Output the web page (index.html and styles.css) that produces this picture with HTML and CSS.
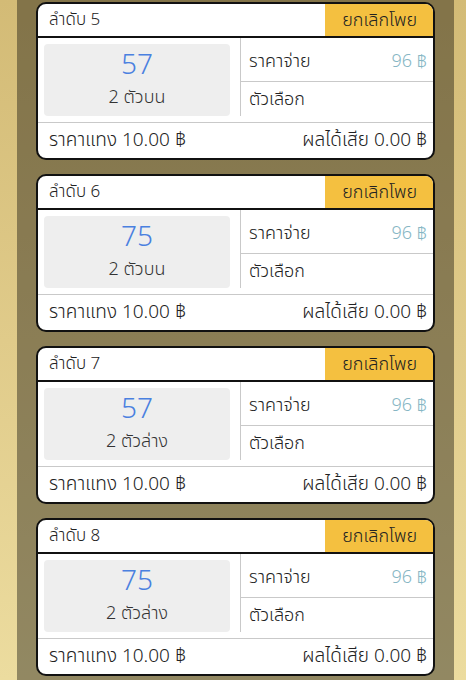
FILE: index.html
```html
<!DOCTYPE html>
<html lang="th">
<head>
<meta charset="utf-8">
<title>โพย</title>
<link rel="stylesheet" href="styles.css">
</head>
<body>
<div class="page">
  <div class="card">
    <div class="card-head"><span class="order">ลำดับ 5</span><span class="cancel">ยกเลิกโพย</span></div>
    <div class="card-body">
      <div class="pick"><div class="num">57</div><div class="type">2 ตัวบน</div></div>
      <div class="info">
        <div class="row row-pay"><span>ราคาจ่าย</span><span class="rate">96 ฿</span></div>
        <div class="row row-opt"><span>ตัวเลือก</span></div>
      </div>
    </div>
    <div class="card-foot"><span>ราคาแทง 10.00 ฿</span><span>ผลได้เสีย 0.00 ฿</span></div>
  </div>
  <div class="card">
    <div class="card-head"><span class="order">ลำดับ 6</span><span class="cancel">ยกเลิกโพย</span></div>
    <div class="card-body">
      <div class="pick"><div class="num">75</div><div class="type">2 ตัวบน</div></div>
      <div class="info">
        <div class="row row-pay"><span>ราคาจ่าย</span><span class="rate">96 ฿</span></div>
        <div class="row row-opt"><span>ตัวเลือก</span></div>
      </div>
    </div>
    <div class="card-foot"><span>ราคาแทง 10.00 ฿</span><span>ผลได้เสีย 0.00 ฿</span></div>
  </div>
  <div class="card">
    <div class="card-head"><span class="order">ลำดับ 7</span><span class="cancel">ยกเลิกโพย</span></div>
    <div class="card-body">
      <div class="pick"><div class="num">57</div><div class="type">2 ตัวล่าง</div></div>
      <div class="info">
        <div class="row row-pay"><span>ราคาจ่าย</span><span class="rate">96 ฿</span></div>
        <div class="row row-opt"><span>ตัวเลือก</span></div>
      </div>
    </div>
    <div class="card-foot"><span>ราคาแทง 10.00 ฿</span><span>ผลได้เสีย 0.00 ฿</span></div>
  </div>
  <div class="card">
    <div class="card-head"><span class="order">ลำดับ 8</span><span class="cancel">ยกเลิกโพย</span></div>
    <div class="card-body">
      <div class="pick"><div class="num">75</div><div class="type">2 ตัวล่าง</div></div>
      <div class="info">
        <div class="row row-pay"><span>ราคาจ่าย</span><span class="rate">96 ฿</span></div>
        <div class="row row-opt"><span>ตัวเลือก</span></div>
      </div>
    </div>
    <div class="card-foot"><span>ราคาแทง 10.00 ฿</span><span>ผลได้เสีย 0.00 ฿</span></div>
  </div>
</div>
</body>
</html>
```

FILE: styles.css
```css
html, body {
  margin: 0;
  padding: 0;
  height: 680px;
  overflow: hidden;
}
body {
  background: linear-gradient(to bottom, #d3bb76 0%, #e0cb8a 50%, #ecdc9f 100%);
  font-family: "Noto Sans Thai", "Noto Sans", sans-serif;
  font-weight: 300;
  color: #222;
}
.page {
  margin-left: 17px;
  width: 437px;
  box-sizing: border-box;
  min-height: 680px;
  padding: 2px 19px 0;
  background: rgba(0, 0, 0, 0.38);
}
.card {
  background: #fff;
  border: 2px solid #111;
  border-radius: 10px;
  overflow: hidden;
  margin-bottom: 14px;
}
.card-head {
  display: flex;
  justify-content: space-between;
  align-items: stretch;
  height: 32px;
  border-bottom: 2px solid #111;
}
.order {
  display: flex;
  align-items: center;
  padding-left: 11px;
  font-size: 17px;
}
.cancel {
  display: flex;
  align-items: center;
  justify-content: flex-end;
  width: 108px;
  box-sizing: border-box;
  padding-right: 16px;
  background: #f4c040;
  font-size: 18px;
}
.card-body {
  display: flex;
  height: 84px;
  border-bottom: 1px solid #c9c9c9;
}
.pick {
  width: 186px;
  margin: 6px 0 6px 6px;
  background: #eeeeee;
  border-radius: 4px;
  display: flex;
  flex-direction: column;
  align-items: center;
  justify-content: center;
  gap: 6px;
}
.num {
  color: #4a80e0;
  font-size: 28px;
  line-height: 30px;
}
.type {
  font-size: 18px;
  line-height: 22px;
  color: #333;
}
.info {
  flex: 1;
  margin-left: 10px;
  margin-bottom: 6px;
  border-left: 1px solid #c9c9c9;
  display: flex;
  flex-direction: column;
  font-size: 18px;
}
.row {
  display: flex;
  justify-content: space-between;
  align-items: center;
  padding: 0 6px 0 8px;
}
.row-pay {
  height: 44px;
  padding-top: 4px;
  box-sizing: border-box;
  border-bottom: 1px solid #c9c9c9;
}
.row-opt {
  flex: 1;
}
.rate {
  color: #86b6c4;
}
.card-foot {
  display: flex;
  justify-content: space-between;
  align-items: center;
  height: 35px;
  padding: 0 6px 0 11px;
  font-size: 19px;
}
```
